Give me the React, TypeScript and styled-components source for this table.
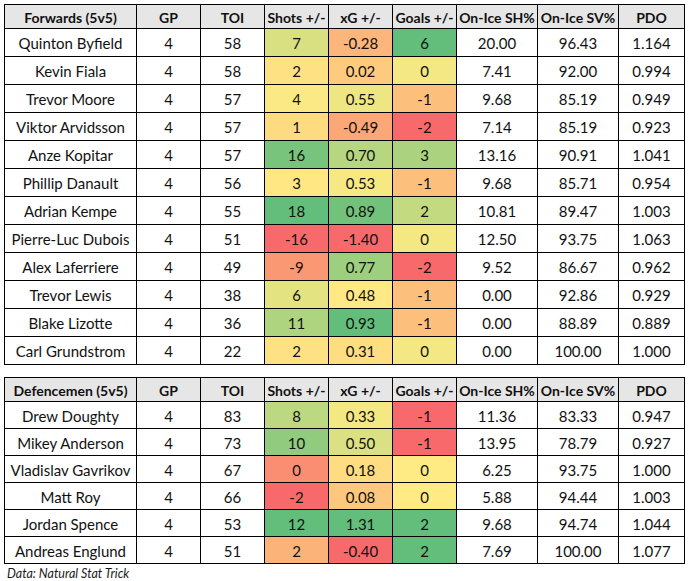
import React from "react";
import styled, { createGlobalStyle } from "styled-components";

const GlobalStyle = createGlobalStyle`
  html, body { margin: 0; padding: 0; background: #ffffff; }
  body { font-family: Lato, "Open Sans", sans-serif; color: #111; }
`;

type Row = {
  name: string;
  gp: number;
  toi: number;
  shots: number;
  xg: string;
  goals: number;
  sh: string;
  sv: string;
  pdo: string;
};

const forwards: Row[] = [
  { name: "Quinton Byfield", gp: 4, toi: 58, shots: 7, xg: "-0.28", goals: 6, sh: "20.00", sv: "96.43", pdo: "1.164" },
  { name: "Kevin Fiala", gp: 4, toi: 58, shots: 2, xg: "0.02", goals: 0, sh: "7.41", sv: "92.00", pdo: "0.994" },
  { name: "Trevor Moore", gp: 4, toi: 57, shots: 4, xg: "0.55", goals: -1, sh: "9.68", sv: "85.19", pdo: "0.949" },
  { name: "Viktor Arvidsson", gp: 4, toi: 57, shots: 1, xg: "-0.49", goals: -2, sh: "7.14", sv: "85.19", pdo: "0.923" },
  { name: "Anze Kopitar", gp: 4, toi: 57, shots: 16, xg: "0.70", goals: 3, sh: "13.16", sv: "90.91", pdo: "1.041" },
  { name: "Phillip Danault", gp: 4, toi: 56, shots: 3, xg: "0.53", goals: -1, sh: "9.68", sv: "85.71", pdo: "0.954" },
  { name: "Adrian Kempe", gp: 4, toi: 55, shots: 18, xg: "0.89", goals: 2, sh: "10.81", sv: "89.47", pdo: "1.003" },
  { name: "Pierre-Luc Dubois", gp: 4, toi: 51, shots: -16, xg: "-1.40", goals: 0, sh: "12.50", sv: "93.75", pdo: "1.063" },
  { name: "Alex Laferriere", gp: 4, toi: 49, shots: -9, xg: "0.77", goals: -2, sh: "9.52", sv: "86.67", pdo: "0.962" },
  { name: "Trevor Lewis", gp: 4, toi: 38, shots: 6, xg: "0.48", goals: -1, sh: "0.00", sv: "92.86", pdo: "0.929" },
  { name: "Blake Lizotte", gp: 4, toi: 36, shots: 11, xg: "0.93", goals: -1, sh: "0.00", sv: "88.89", pdo: "0.889" },
  { name: "Carl Grundstrom", gp: 4, toi: 22, shots: 2, xg: "0.31", goals: 0, sh: "0.00", sv: "100.00", pdo: "1.000" },
];

const defence: Row[] = [
  { name: "Drew Doughty", gp: 4, toi: 83, shots: 8, xg: "0.33", goals: -1, sh: "11.36", sv: "83.33", pdo: "0.947" },
  { name: "Mikey Anderson", gp: 4, toi: 73, shots: 10, xg: "0.50", goals: -1, sh: "13.95", sv: "78.79", pdo: "0.927" },
  { name: "Vladislav Gavrikov", gp: 4, toi: 67, shots: 0, xg: "0.18", goals: 0, sh: "6.25", sv: "93.75", pdo: "1.000" },
  { name: "Matt Roy", gp: 4, toi: 66, shots: -2, xg: "0.08", goals: 0, sh: "5.88", sv: "94.44", pdo: "1.003" },
  { name: "Jordan Spence", gp: 4, toi: 53, shots: 12, xg: "1.31", goals: 2, sh: "9.68", sv: "94.74", pdo: "1.044" },
  { name: "Andreas Englund", gp: 4, toi: 51, shots: 2, xg: "-0.40", goals: 2, sh: "7.69", sv: "100.00", pdo: "1.077" },
];

const RED = [248, 105, 107];
const YELLOW = [255, 235, 132];
const GREEN = [99, 190, 123];

function median(values: number[]): number {
  const s = [...values].sort((a, b) => a - b);
  const n = s.length;
  return n % 2 ? s[(n - 1) / 2] : (s[n / 2 - 1] + s[n / 2]) / 2;
}

function lerp(a: number[], b: number[], t: number): string {
  const c = a.map((v, i) => Math.round(v + (b[i] - v) * t));
  return `rgb(${c[0]}, ${c[1]}, ${c[2]})`;
}

function makeScale(values: number[]) {
  const min = Math.min(...values);
  const max = Math.max(...values);
  const mid = median(values);
  return (v: number) => {
    if (v <= mid) {
      const t = mid === min ? 1 : (v - min) / (mid - min);
      return lerp(RED, YELLOW, t);
    }
    const t = max === mid ? 0 : (v - mid) / (max - mid);
    return lerp(YELLOW, GREEN, t);
  };
}

const Page = styled.div`
  padding: 4px 0 0 4px;
  width: 688px;
  box-sizing: border-box;
`;

const Grid = styled.div<{ $rowH: number; $rows: number }>`
  display: grid;
  grid-template-columns: 132px 64px 64px 64px 64px 64px 81px 81px 66px;
  grid-template-rows: 24px repeat(${(p) => p.$rows}, ${(p) => p.$rowH}px);
  width: 681px;
  border-left: 1px solid #000;
  border-top: 1px solid #000;
  box-sizing: border-box;
  & + & {
    margin-top: 12px;
  }
`;

const HeadCell = styled.div`
  display: flex;
  align-items: center;
  justify-content: center;
  box-sizing: border-box;
  background: #e7e6e6;
  border-right: 1px solid #000;
  border-bottom: 1px solid #000;
  font-weight: 700;
  font-size: 14px;
  white-space: nowrap;
  padding-top: 1px;
`;

const Cell = styled.div<{ $bg?: string }>`
  display: flex;
  align-items: center;
  justify-content: center;
  box-sizing: border-box;
  background: ${(p) => p.$bg ?? "#ffffff"};
  border-right: 1px solid #000;
  border-bottom: 1px solid #000;
  font-size: 15px;
  white-space: nowrap;
  padding-top: 1px;
`;

const HeaderRow = styled.div`
  display: contents;
`;

const Caption = styled.div`
  margin: 2px 0 0 7px;
  font-style: italic;
  font-size: 12.5px;
  color: #1a1a1a;
`;

const headers = ["GP", "TOI", "Shots +/-", "xG +/-", "Goals +/-", "On-Ice SH%", "On-Ice SV%", "PDO"];

function StatTable({ title, rows, rowH }: { title: string; rows: Row[]; rowH: number }) {
  const shotScale = makeScale(rows.map((r) => r.shots));
  const xgScale = makeScale(rows.map((r) => parseFloat(r.xg)));
  const goalScale = makeScale(rows.map((r) => r.goals));
  return (
    <Grid $rowH={rowH} $rows={rows.length}>
      <HeaderRow>
        <HeadCell>{title}</HeadCell>
        {headers.map((h) => (
          <HeadCell key={h}>{h}</HeadCell>
        ))}
      </HeaderRow>
      {rows.map((r) => (
        <React.Fragment key={r.name}>
          <Cell>{r.name}</Cell>
          <Cell>{r.gp}</Cell>
          <Cell>{r.toi}</Cell>
          <Cell $bg={shotScale(r.shots)}>{r.shots}</Cell>
          <Cell $bg={xgScale(parseFloat(r.xg))}>{r.xg}</Cell>
          <Cell $bg={goalScale(r.goals)}>{r.goals}</Cell>
          <Cell>{r.sh}</Cell>
          <Cell>{r.sv}</Cell>
          <Cell>{r.pdo}</Cell>
        </React.Fragment>
      ))}
    </Grid>
  );
}

export default function App() {
  return (
    <>
      <GlobalStyle />
      <Page>
        <StatTable title="Forwards (5v5)" rows={forwards} rowH={28} />
        <StatTable title="Defencemen (5v5)" rows={defence} rowH={27} />
      </Page>
      <Caption>Data: Natural Stat Trick</Caption>
    </>
  );
}
